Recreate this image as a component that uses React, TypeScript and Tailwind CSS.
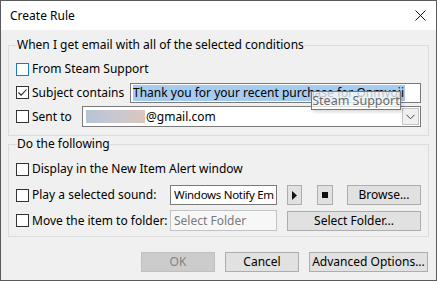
import React from 'react';

const font = { fontFamily: '"Noto Sans", "Open Sans", sans-serif' };

function CheckBox({ checked = false, focus = false }: { checked?: boolean; focus?: boolean }) {
    return (
        <span
            className={
                'flex h-[13px] w-[13px] shrink-0 items-center justify-center border bg-white ' +
                (focus ? 'border-[#1a7ad3]' : 'border-[#333333]')
            }
        >
            {checked && (
                <svg width="11" height="11" viewBox="0 0 11 11">
                    <path d="M1.5 5.5 L4.2 8.2 L9.5 2.5" fill="none" stroke="#222" strokeWidth="1.1" />
                </svg>
            )}
        </span>
    );
}

function Btn({ children, className = '', disabled = false }: { children?: React.ReactNode; className?: string; disabled?: boolean }) {
    return (
        <div
            className={
                'flex items-center justify-center border text-[12px] ' +
                (disabled
                    ? 'border-[#bfbfbf] bg-[#cccccc] text-[#838383] '
                    : 'border-[#adadad] bg-[#e1e1e1] text-black ') +
                className
            }
        >
            {children}
        </div>
    );
}

export default function App() {
    return (
        <div className="flex h-[281px] w-[437px] flex-col border border-[#5a5a5a] bg-[#f0f0f0] text-[12px] leading-[16px] text-black" style={font}>
            {/* Title bar */}
            <div className="flex h-[29px] shrink-0 items-center justify-between bg-white pl-[9px] pr-[10px]">
                <span className="text-[12px]">Create Rule</span>
                <svg width="11" height="11" viewBox="0 0 11 11">
                    <path d="M0.5 0.5 L10.5 10.5 M10.5 0.5 L0.5 10.5" stroke="#111" strokeWidth="1" />
                </svg>
            </div>

            {/* Conditions */}
            <fieldset className="mx-[7px] mt-[7px] h-[99px] border border-[#dcdcdc] px-[7px]">
                <legend className="ml-[1px] px-[0px] leading-[16px]">When I get email with all of the selected conditions</legend>
                <div className="mt-[4px] flex h-[24px] items-center gap-[3px]">
                    <CheckBox focus />
                    <span>From Steam Support</span>
                </div>
                <div className="relative mt-[1px] flex h-[21px] items-center">
                    <CheckBox checked />
                    <span className="ml-[3px] w-[98px]">Subject contains</span>
                    <div className="flex h-[20px] flex-1 items-center border border-[#7a7a7a] bg-white pl-[2px]">
                        <span className="bg-[#a5cbef] pr-[1px] leading-[16px]">Thank you for your recent purchase for Onmyoji</span>
                    </div>
                    <div className="absolute left-[295px] top-[9px] flex h-[19px] w-[90px] items-center justify-center whitespace-nowrap border border-[#767676] bg-white/75 text-[12.5px] text-[#6a6a6a] shadow-[2px_2px_3px_rgba(0,0,0,0.15)]">
                        Steam Support
                    </div>
                </div>
                <div className="mt-[3px] flex h-[21px] items-center">
                    <CheckBox />
                    <span className="ml-[3px] w-[50px]">Sent to</span>
                    <div className="flex h-[21px] flex-1 items-center border border-[#7a7a7a] bg-white pl-[3px]">
                        <span className="h-[13px] w-[59px] bg-[linear-gradient(90deg,#b7c3d3_0%,#c6c8d2_45%,#dcc6bd_100%)] blur-[0.5px]" />
                        <span className="ml-[1px]">@gmail.com</span>
                        <div className="ml-auto mr-[1px] flex h-[17px] w-[17px] items-center justify-center border border-[#c4c4c4] bg-[#f0f0f0]">
                            <svg width="9" height="6" viewBox="0 0 9 6">
                                <path d="M0.5 0.8 L4.5 4.8 L8.5 0.8" fill="none" stroke="#444" strokeWidth="1" />
                            </svg>
                        </div>
                    </div>
                </div>
            </fieldset>

            {/* Actions */}
            <fieldset className="mx-[7px] h-[101px] border border-[#dcdcdc] px-[7px]">
                <legend className="ml-[1px] leading-[16px]">Do the following</legend>
                <div className="mt-[7px] flex h-[20px] items-center gap-[3px]">
                    <CheckBox />
                    <span>Display in the New Item Alert window</span>
                </div>
                <div className="mt-[6px] flex h-[20px] items-center">
                    <CheckBox />
                    <span className="ml-[3px] w-[138px]">Play a selected sound:</span>
                    <div className="flex h-[20px] w-[107px] items-center overflow-hidden whitespace-nowrap border border-[#7a7a7a] bg-white pl-[3px] text-[11.5px] tracking-[-0.3px]">
                        Windows Notify Em
                    </div>
                    <Btn className="ml-[10px] h-[20px] w-[15px]">
                        <svg width="5" height="9" viewBox="0 0 5 9">
                            <path d="M0 0 L5 4.5 L0 9 Z" fill="#111" />
                        </svg>
                    </Btn>
                    <Btn className="ml-[15px] h-[20px] w-[16px]">
                        <span className="h-[6px] w-[6px] bg-[#111]" />
                    </Btn>
                    <Btn className="ml-[14px] h-[20px] flex-1">Browse...</Btn>
                </div>
                <div className="mt-[5px] flex h-[21px] items-center">
                    <CheckBox />
                    <span className="ml-[3px] w-[138px]">Move the item to folder:</span>
                    <div className="flex h-[21px] w-[107px] items-center border border-[#c3c3c3] bg-[#f7f7f7] pl-[3px] text-[#7a7a7a]">
                        Select Folder
                    </div>
                    <Btn className="ml-[10px] h-[20px] flex-1">Select Folder...</Btn>
                </div>
            </fieldset>

            {/* Footer buttons */}
            <div className="mt-[15px] flex justify-end gap-[10px] pr-[8px]">
                <Btn disabled className="h-[20px] w-[74px]">OK</Btn>
                <Btn className="h-[20px] w-[74px]">Cancel</Btn>
                <Btn className="h-[20px] w-[119px]">Advanced Options...</Btn>
            </div>
        </div>
    );
}
